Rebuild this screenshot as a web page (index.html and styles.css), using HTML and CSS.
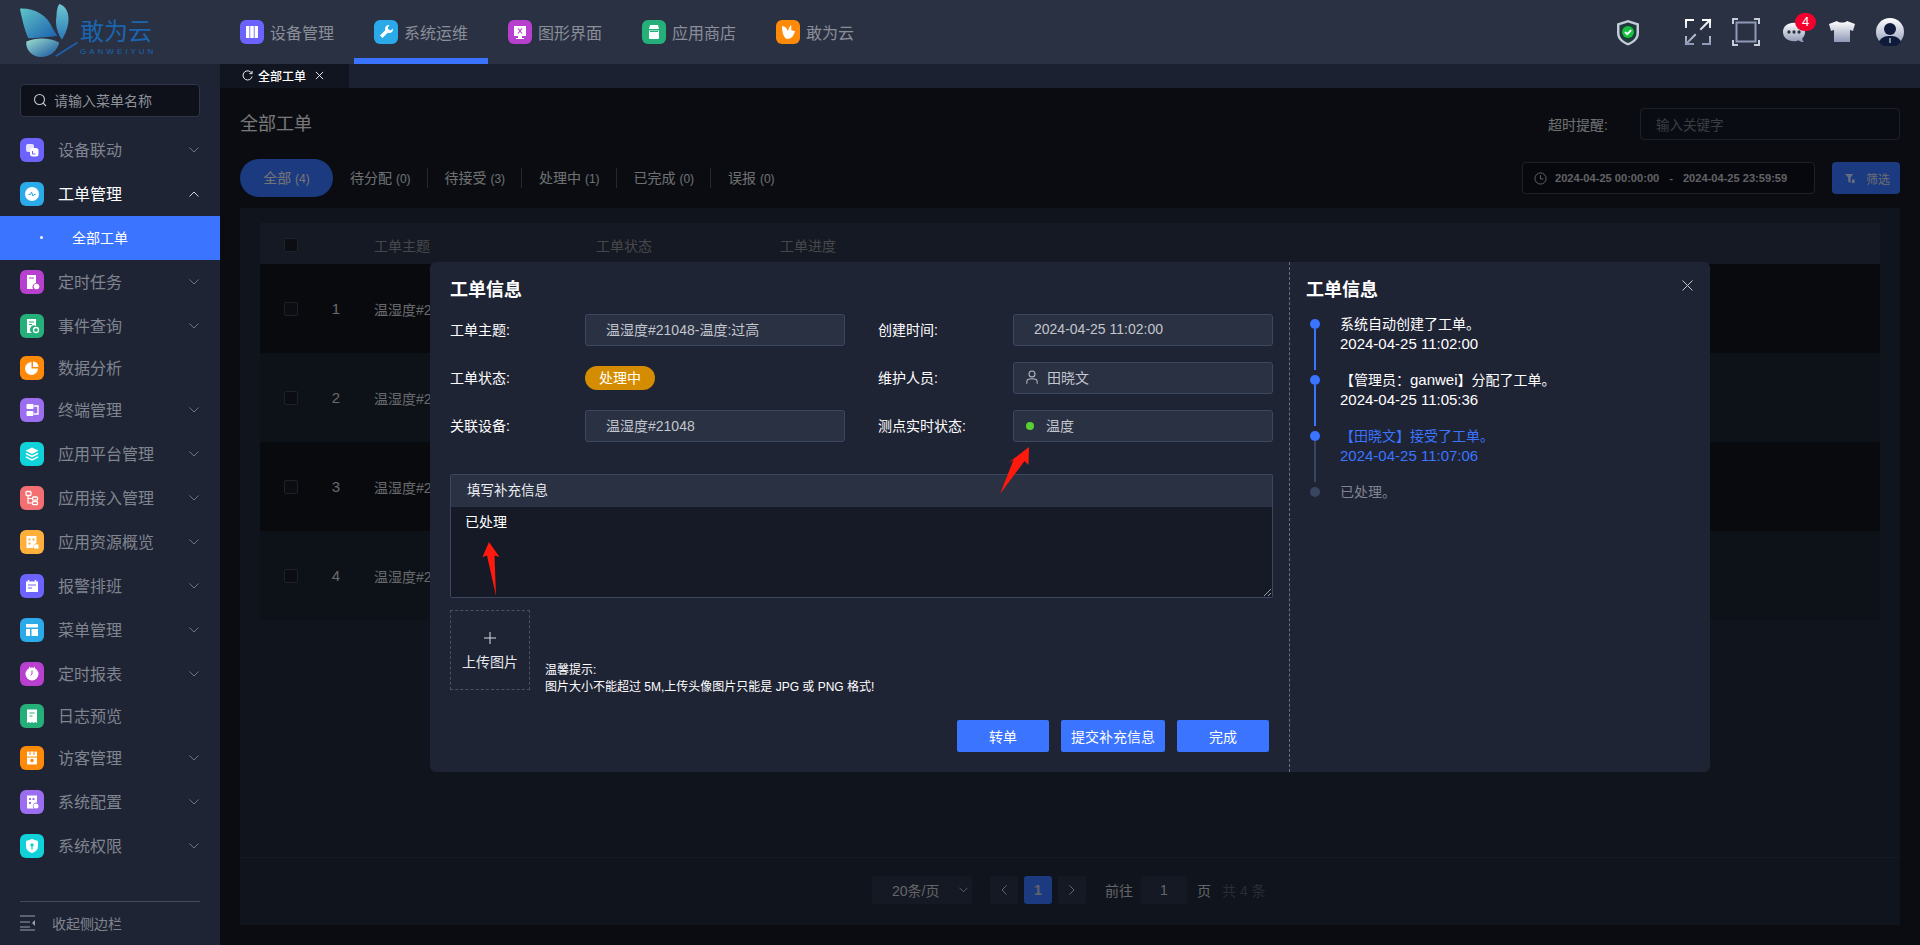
FILE: index.html
```html
<!DOCTYPE html>
<html lang="zh-CN">
<head>
<meta charset="utf-8">
<title>全部工单</title>
<link rel="stylesheet" href="styles.css">
</head>
<body>
<svg class="defs" width="0" height="0" aria-hidden="true">
  <defs>
    <linearGradient id="wingA" x1="0" y1="0" x2="1" y2="1"><stop offset="0" stop-color="#5fc4c8"/><stop offset="1" stop-color="#1a5fae"/></linearGradient>
    <linearGradient id="wingB" x1="0" y1="0" x2="0" y2="1"><stop offset="0" stop-color="#6cc8d0"/><stop offset="1" stop-color="#2a78b8"/></linearGradient>
    <linearGradient id="wingC" x1="0" y1="0" x2="1" y2="1"><stop offset="0" stop-color="#9fe0cf"/><stop offset="1" stop-color="#124f9e"/></linearGradient>
    <linearGradient id="metal" x1="0" y1="0" x2="0" y2="1"><stop offset="0" stop-color="#ffffff"/><stop offset="1" stop-color="#8e99b5"/></linearGradient>
    <symbol id="i-books" viewBox="0 0 24 24"><path d="M6 6h3.4v12H6zM10.2 6h3.6v12h-3.6zM14.6 6H18v12h-3.4z" fill="#fff"/></symbol>
    <symbol id="i-wrench" viewBox="0 0 24 24"><path d="M15.5 5a4 4 0 0 0-4.3 5.300L6 15.500 8.500 18l5.200-5.200A4 4 0 0 0 19 8.500l-2.500 2-2.500-1.500V7z" fill="#fff"/></symbol>
    <symbol id="i-screen" viewBox="0 0 24 24"><path d="M6 6h12v10H6z" fill="#fff"/><path d="M10 16h4v2h2v1H8v-1h2z" fill="#fff"/><path d="M10 8.500l4 5M14 8.500l-4 5" stroke="#b840cf" stroke-width="1.200"/></symbol>
    <symbol id="i-store" viewBox="0 0 24 24"><path d="M8 5h8l1 4H7zM7 10.500h10V18a1 1 0 0 1-1 1H8a1 1 0 0 1-1-1z" fill="#fff"/><path d="M8 11.500h8" stroke="#25b07a"/></symbol>
    <symbol id="i-fly" viewBox="0 0 24 24"><path d="M6 6c3 0 5 2.500 6 5 .5-2 1.500-4.500 3-6 .5 2 .5 3 0 5 1 .5 3 1 4 1-1 5-4 8-8 8-3-1-5-6-5-13z" fill="#fff"/></symbol>
    <symbol id="i-copy" viewBox="0 0 24 24"><rect x="6" y="6" width="8" height="8" rx="2" fill="#e6e2ff"/><rect x="10" y="10" width="8.500" height="8.500" rx="2.500" fill="#fff"/><path d="M12.500 13v3h3" stroke="#6c63ff" fill="none"/></symbol>
    <symbol id="i-pulse" viewBox="0 0 24 24"><circle cx="12" cy="12" r="7" fill="#fff"/><path d="M8.500 12.500h2l1-2.500 1.500 4 1-1.500h1.500" stroke="#2aaae8" fill="none"/></symbol>
    <symbol id="i-doc-clock" viewBox="0 0 24 24"><path d="M7 5h9v8a4 4 0 0 0-3 6H7z" fill="#fff"/><circle cx="16.500" cy="16.500" r="2.800" fill="#fff"/><path d="M9 8h5" stroke="#b840cf"/></symbol>
    <symbol id="i-doc-search" viewBox="0 0 24 24"><path d="M7 5h9v7a4 4 0 0 0-4 7H7z" fill="#fff"/><circle cx="16" cy="16" r="2.500" fill="none" stroke="#fff" stroke-width="1.300"/><path d="M9 8h5M9 10.500h3" stroke="#25b07a"/></symbol>
    <symbol id="i-pie" viewBox="0 0 24 24"><path d="M11.500 6v6.500H18A6.500 6.500 0 1 1 11.500 6z" fill="#fff"/><path d="M13 5.500A6 6 0 0 1 18.500 11H13z" fill="#fff"/></symbol>
    <symbol id="i-term" viewBox="0 0 24 24"><rect x="6.500" y="6" width="7" height="5" rx="1" fill="#fff"/><rect x="6.500" y="13" width="7" height="5" rx="1" fill="#fff"/><path d="M14 8h4v8h-4" stroke="#fff" stroke-width="1.400" fill="none"/></symbol>
    <symbol id="i-layers" viewBox="0 0 24 24"><path d="M12 5.500l6.500 3.300L12 12 5.500 8.800z" fill="#fff"/><path d="M6 11.500l6 3 6-3M6 14.800l6 3 6-3" stroke="#fff" stroke-width="1.500" fill="none"/></symbol>
    <symbol id="i-tree" viewBox="0 0 24 24"><rect x="6" y="5.500" width="5" height="4" rx="1" fill="none" stroke="#fff" stroke-width="1.300"/><rect x="12.500" y="11" width="5" height="3.200" rx="1" fill="none" stroke="#fff" stroke-width="1.300"/><rect x="12.500" y="15.500" width="5" height="3.200" rx="1" fill="none" stroke="#fff" stroke-width="1.300"/><path d="M8 9.500v7.500h4.500M8 12.500h4.500" stroke="#fff" stroke-width="1.200" fill="none"/></symbol>
    <symbol id="i-res" viewBox="0 0 24 24"><path d="M6.500 6h10v7a4 4 0 0 0-3 5h-7z" fill="#fff"/><rect x="14" y="14.500" width="4.500" height="4" fill="#fff"/><path d="M8.500 8.500h2v2h-2zM12.500 8.500h2v2h-2zM8.500 12.500h2v2h-2z" fill="#ffb03a"/></symbol>
    <symbol id="i-cal" viewBox="0 0 24 24"><path d="M6 7.500h12V18H6z" fill="#fff"/><path d="M8.500 6v3M15.500 6v3" stroke="#fff" stroke-width="1.500"/><path d="M8 11h8M8 14h4" stroke="#6c63ff"/></symbol>
    <symbol id="i-panel" viewBox="0 0 24 24"><path d="M6 6h12v3.500H6zM6 11h4v7H6zM11.500 11H18v7h-6.500z" fill="#fff"/></symbol>
    <symbol id="i-clock" viewBox="0 0 24 24"><circle cx="12" cy="12" r="6.500" fill="#fff"/><path d="M12 8.500V12l-1.500 1.500" stroke="#b840cf" fill="none"/><path d="M9 5l1.500 1M15 5l-1.500 1" stroke="#fff"/></symbol>
    <symbol id="i-log" viewBox="0 0 24 24"><path d="M7 5.500h10V19l-1.700-1-1.600 1-1.700-1-1.700 1-1.600-1L7 19z" fill="#fff"/><path d="M9.500 9h5M9.500 12h3" stroke="#25b07a"/></symbol>
    <symbol id="i-guest" viewBox="0 0 24 24"><rect x="7" y="5.500" width="10" height="13" rx="1" fill="#fff"/><path d="M10 5v4M14 5v4M7 11h10" stroke="#ff8a0a"/><circle cx="12" cy="14.500" r="1.800" fill="#ff8a0a"/></symbol>
    <symbol id="i-conf" viewBox="0 0 24 24"><path d="M7 5.500h10v7a3.500 3.500 0 0 0-3 6H7z" fill="#fff"/><path d="M9 8h2v2H9zM12.500 8h2v2h-2zM9 12h2v2H9z" fill="#9b6ef0"/><circle cx="16" cy="16" r="2.500" fill="#fff"/></symbol>
    <symbol id="i-shield" viewBox="0 0 24 24"><path d="M12 5l6 2v5c0 3.500-2.500 6-6 7-3.500-1-6-3.500-6-7V7z" fill="#fff"/><circle cx="12" cy="11" r="1.700" fill="#10d2d8"/><path d="M12 12v3.500" stroke="#10d2d8" stroke-width="1.200"/></symbol>
  </defs>
</svg>

<header class="topbar">
  <div class="logo">
    <svg class="logo-mark" viewBox="0 0 70 60" aria-hidden="true">
      <path d="M1 5c14-1 30 6 36 22l5 8C30 36 17 38 10 37 6 28 3 15 1 5z" fill="url(#wingA)"/>
      <path d="M44 0c8 2 11 11 10 20-1 8-4 14-7 19-4-6-8-15-6-26 0-5 1-10 3-13z" fill="url(#wingB)"/>
      <path d="M8 41c12-5 26-4 36 1-2 9-10 16-20 16C14 58 7 50 8 41z" fill="url(#wingC)"/>
      <path d="M40 57l24-15" stroke="#1d5fae" stroke-width="2"/>
    </svg>
    <div class="logo-text">
      <span class="logo-cn">敢为云</span>
      <span class="logo-en">GANWEIYUN</span>
    </div>
  </div>
  <nav class="topnav">
    <a class="topnav-item"><svg class="tile bg-indigo"><use href="#i-books"/></svg><span>设备管理</span></a>
    <a class="topnav-item is-active"><svg class="tile bg-blue"><use href="#i-wrench"/></svg><span>系统运维</span></a>
    <a class="topnav-item"><svg class="tile bg-magenta"><use href="#i-screen"/></svg><span>图形界面</span></a>
    <a class="topnav-item"><svg class="tile bg-green"><use href="#i-store"/></svg><span>应用商店</span></a>
    <a class="topnav-item"><svg class="tile bg-orange"><use href="#i-fly"/></svg><span>敢为云</span></a>
  </nav>
  <div class="tools">
    <svg class="tool tool-shield" viewBox="0 0 28 28" aria-hidden="true">
      <path d="M14 2l11 3.500v9.500c0 6-4.500 10-11 12.500C7.500 25 3 21 3 15V5.500z" fill="#c3cbd8"/>
      <path d="M14 4.500l8.500 2.700V15c0 4.800-3.500 8-8.500 10-5-2-8.500-5.200-8.500-10V7.200z" fill="#1f3a3a"/>
      <circle cx="14" cy="14" r="6" fill="#15c13f"/>
      <path d="M11 14l2.200 2.200 4-4" stroke="#fff" stroke-width="1.800" fill="none"/>
    </svg>
    <svg class="tool" viewBox="0 0 28 28" aria-hidden="true">
      <g fill="none" stroke="url(#metal)" stroke-width="2" stroke-linecap="square">
        <path d="M2 9V2h7M26 19v7h-7"/>
        <path d="M17 11l9-9M11 17l-9 9"/>
        <path d="M19 2h7v7M9 26H2v-7"/>
      </g>
    </svg>
    <svg class="tool" viewBox="0 0 28 28" aria-hidden="true">
      <g fill="none" stroke-width="2">
        <rect x="4.500" y="4.500" width="19" height="19" stroke="#8e99b5"/>
        <path d="M1 6V1h5M22 1h5v5M27 22v5h-5M6 27H1v-5" stroke="#c6ccd9"/>
      </g>
    </svg>
    <div class="tool-chat">
      <svg class="tool" viewBox="-1.250 -1.250 30.500 30.500" aria-hidden="true">
        <path d="M14 4c7 0 12 4 12 10 0 3-1 5-3 7 0 2 1 3 2 4-3 0-5-1-6-2-2 1-3 1-5 1-7 0-12-4-12-10S7 4 14 4z" fill="url(#metal)"/>
        <circle cx="8.500" cy="14" r="1.800" fill="#2a3143"/><circle cx="14" cy="14" r="1.800" fill="#2a3143"/><circle cx="19.500" cy="14" r="1.800" fill="#2a3143"/>
      </svg>
      <span class="badge">4</span>
    </div>
    <svg class="tool" viewBox="0 0 28 28" aria-hidden="true">
      <path d="M9 3c2 2 8 2 10 0l8 3-2 7-3-1v12H6V12l-3 1-2-7z" fill="url(#metal)"/>
    </svg>
    <svg class="tool" viewBox="0 0 28 28" aria-hidden="true">
      <circle cx="14" cy="14" r="14" fill="url(#metal)"/>
      <circle cx="14" cy="11" r="6" fill="#101a3a"/>
      <path d="M3 24c2-5 6-6 11-6s9 1 11 6a14 14 0 0 1-22 0z" fill="#101a3a"/>
      <path d="M14 20v5" stroke="#c8cedc" stroke-width="1.200"/>
    </svg>
  </div>
</header>

<div class="layout">
  <aside class="sidebar">
    <div class="menu-search">
      <svg class="search-ic" viewBox="0 0 14 14" aria-hidden="true"><circle cx="6.500" cy="6.500" r="5" fill="none" stroke="#c5c8cf" stroke-width="1.100"/><path d="M10.200 10.200L13 13" stroke="#c5c8cf" stroke-width="1.100"/></svg>
      <span>请输入菜单名称</span>
    </div>
    <ul class="menu">
      <li class="menu-item"><svg class="tile bg-indigo"><use href="#i-copy"/></svg><span>设备联动</span><svg class="chev" viewBox="0 0 10 6"><path d="M.5.500L5 5 9.500.5"/></svg></li>
      <li class="menu-item is-open"><svg class="tile bg-blue"><use href="#i-pulse"/></svg><span>工单管理</span><svg class="chev" viewBox="0 0 10 6"><path d="M.5 5.500L5 1l4.500 4.500"/></svg></li>
      <li class="menu-sub"><i class="sub-dot"></i><span>全部工单</span></li>
      <li class="menu-item"><svg class="tile bg-magenta"><use href="#i-doc-clock"/></svg><span>定时任务</span><svg class="chev" viewBox="0 0 10 6"><path d="M.5.500L5 5 9.500.5"/></svg></li>
      <li class="menu-item"><svg class="tile bg-green"><use href="#i-doc-search"/></svg><span>事件查询</span><svg class="chev" viewBox="0 0 10 6"><path d="M.5.500L5 5 9.500.5"/></svg></li>
      <li class="menu-item is-leaf"><svg class="tile bg-orange"><use href="#i-pie"/></svg><span>数据分析</span></li>
      <li class="menu-item"><svg class="tile bg-violet"><use href="#i-term"/></svg><span>终端管理</span><svg class="chev" viewBox="0 0 10 6"><path d="M.5.500L5 5 9.500.5"/></svg></li>
      <li class="menu-item"><svg class="tile bg-teal"><use href="#i-layers"/></svg><span>应用平台管理</span><svg class="chev" viewBox="0 0 10 6"><path d="M.5.500L5 5 9.500.5"/></svg></li>
      <li class="menu-item"><svg class="tile bg-coral"><use href="#i-tree"/></svg><span>应用接入管理</span><svg class="chev" viewBox="0 0 10 6"><path d="M.5.500L5 5 9.500.5"/></svg></li>
      <li class="menu-item"><svg class="tile bg-amber"><use href="#i-res"/></svg><span>应用资源概览</span><svg class="chev" viewBox="0 0 10 6"><path d="M.5.500L5 5 9.500.5"/></svg></li>
      <li class="menu-item"><svg class="tile bg-indigo"><use href="#i-cal"/></svg><span>报警排班</span><svg class="chev" viewBox="0 0 10 6"><path d="M.5.500L5 5 9.500.5"/></svg></li>
      <li class="menu-item"><svg class="tile bg-blue"><use href="#i-panel"/></svg><span>菜单管理</span><svg class="chev" viewBox="0 0 10 6"><path d="M.5.500L5 5 9.500.5"/></svg></li>
      <li class="menu-item"><svg class="tile bg-magenta"><use href="#i-clock"/></svg><span>定时报表</span><svg class="chev" viewBox="0 0 10 6"><path d="M.5.500L5 5 9.500.5"/></svg></li>
      <li class="menu-item is-leaf"><svg class="tile bg-green"><use href="#i-log"/></svg><span>日志预览</span></li>
      <li class="menu-item"><svg class="tile bg-orange"><use href="#i-guest"/></svg><span>访客管理</span><svg class="chev" viewBox="0 0 10 6"><path d="M.5.500L5 5 9.500.5"/></svg></li>
      <li class="menu-item"><svg class="tile bg-violet"><use href="#i-conf"/></svg><span>系统配置</span><svg class="chev" viewBox="0 0 10 6"><path d="M.5.500L5 5 9.500.5"/></svg></li>
      <li class="menu-item"><svg class="tile bg-teal"><use href="#i-shield"/></svg><span>系统权限</span><svg class="chev" viewBox="0 0 10 6"><path d="M.5.500L5 5 9.500.5"/></svg></li>
    </ul>
    <div class="collapse">
      <svg class="collapse-ic" viewBox="0 0 16 16" aria-hidden="true"><path d="M0 1h15M0 7h10M0 12h10M0 15h15" stroke="#9aa0ac" fill="none"/><path d="M15 5v6l-3-3z" fill="#9aa0ac"/></svg>
      <span>收起侧边栏</span>
    </div>
  </aside>

  <main class="main">
    <div class="tabbar">
      <div class="tab">
        <svg class="tab-ic" viewBox="0 0 12 12" aria-hidden="true"><path d="M10.500 3.500A5 5 0 1 0 11 7" fill="none" stroke="#fff" stroke-width="1"/><path d="M11 1v3H8" fill="none" stroke="#fff" stroke-width="1"/></svg>
        <span>全部工单</span>
        <svg class="tab-x" viewBox="0 0 10 10" aria-hidden="true"><path d="M1 1l8 8M9 1L1 9" stroke="#fff"/></svg>
      </div>
    </div>

    <div class="content">
      <div class="page">
        <div class="page-head">
          <h1 class="page-title">全部工单</h1>
          <label class="kw-label">超时提醒:</label>
          <div class="kw-input">输入关键字</div>
        </div>
        <div class="filter-row">
          <div class="status-tabs">
            <span class="st-pill">全部 <small>(4)</small></span>
            <span class="st-item">待分配 <small>(0)</small></span>
            <span class="st-item">待接受 <small>(3)</small></span>
            <span class="st-item">处理中 <small>(1)</small></span>
            <span class="st-item">已完成 <small>(0)</small></span>
            <span class="st-item is-last">误报 <small>(0)</small></span>
          </div>
          <div class="date-range">
            <svg class="date-ic" viewBox="0 0 14 14" aria-hidden="true"><circle cx="7" cy="7" r="6" fill="none" stroke="#fff"/><path d="M7 3.500V7.500H10" fill="none" stroke="#fff"/></svg>
            <span>2024-04-25 00:00:00</span><span class="date-sep">-</span><span>2024-04-25 23:59:59</span>
          </div>
          <button class="filter-btn">
            <svg class="filter-ic" viewBox="0 0 12 12" aria-hidden="true"><path d="M0 1h9L6 5v6L3.500 9.500V5z" fill="#fff"/><rect x="7.500" y="7" width="3" height="4" fill="#fff"/></svg>
            筛选
          </button>
        </div>
        <section class="panel">
          <div class="table">
            <div class="t-row t-head"><i class="check is-head"></i><span></span><span>工单主题</span><span>工单状态</span><span>工单进度</span></div>
            <div class="t-row t-odd"><i class="check"></i><span class="t-num">1</span><span>温湿度#2</span><span></span><span></span></div>
            <div class="t-row t-even"><i class="check"></i><span class="t-num">2</span><span>温湿度#2</span><span></span><span></span></div>
            <div class="t-row t-odd"><i class="check"></i><span class="t-num">3</span><span>温湿度#2</span><span></span><span></span></div>
            <div class="t-row t-even"><i class="check"></i><span class="t-num">4</span><span>温湿度#2</span><span></span><span></span></div>
          </div>
          <div class="pager">
            <div class="pg-select">20条/页<svg class="pg-chev" viewBox="0 0 10 6"><path d="M.5.500L5 5 9.500.5"/></svg></div>
            <div class="pg-btn"><svg viewBox="0 0 6 10"><path d="M5.500.5L1 5l4.500 4.500"/></svg></div>
            <div class="pg-btn is-current">1</div>
            <div class="pg-btn"><svg viewBox="0 0 6 10"><path d="M.5.500L5 5 .5 9.500"/></svg></div>
            <span class="pg-goto">前往</span>
            <div class="pg-input">1</div>
            <span class="pg-page">页</span>
            <span class="pg-total">共 4 条</span>
          </div>
        </section>
      </div>

      <div class="overlay"></div>

      <div class="modal">
        <div class="m-left">
          <h2 class="m-title">工单信息</h2>
          <div class="form">
            <label>工单主题:</label><div class="field">温湿度#21048-温度:过高</div>
            <label>创建时间:</label><div class="field">2024-04-25 11:02:00</div>
            <label>工单状态:</label><div class="plain"><span class="status-pill">处理中</span></div>
            <label>维护人员:</label>
            <div class="field field-ic">
              <svg class="user-ic" viewBox="0 0 14 16" aria-hidden="true"><circle cx="7" cy="4.500" r="3.500" fill="none" stroke="#b9bcc4" stroke-width="1.200"/><path d="M1 16v-3c0-2 2-3 6-3s6 1 6 3v3" fill="none" stroke="#b9bcc4" stroke-width="1.200"/></svg>
              <span>田晓文</span>
            </div>
            <label>关联设备:</label><div class="field">温湿度#21048</div>
            <label>测点实时状态:</label>
            <div class="field field-ic"><i class="live-dot"></i><span>温度</span></div>
          </div>
          <div class="extra">
            <div class="extra-head">填写补充信息</div>
            <div class="extra-body">已处理<svg class="resize" viewBox="0 0 8 8" aria-hidden="true"><path d="M1 8l7-7M5 8l3-3" stroke="#9aa0ac"/></svg></div>
          </div>
          <div class="upload-row">
            <div class="upload">
              <svg class="plus" viewBox="0 0 12 12" aria-hidden="true"><path d="M6 0v12M0 6h12" stroke="#d8dbe2"/></svg>
              <span>上传图片</span>
            </div>
            <p class="hint">温馨提示:<br>图片大小不能超过 5M,上传头像图片只能是 JPG 或 PNG 格式!</p>
          </div>
          <div class="actions">
            <button class="btn">转单</button>
            <button class="btn btn-wide">提交补充信息</button>
            <button class="btn">完成</button>
          </div>
        </div>
        <div class="m-right">
          <h2 class="m-title">工单信息</h2>
          <ul class="timeline">
            <li class="tl-item is-done"><div class="tl-rail"><i class="tl-dot"></i><i class="tl-line"></i></div><p>系统自动创建了工单。<br><span class="tl-num">2024-04-25 11:02:00</span></p></li>
            <li class="tl-item is-done"><div class="tl-rail"><i class="tl-dot"></i><i class="tl-line"></i></div><p>【管理员：<span class="tl-num">ganwei</span>】分配了工单。<br><span class="tl-num">2024-04-25 11:05:36</span></p></li>
            <li class="tl-item is-current"><div class="tl-rail"><i class="tl-dot"></i><i class="tl-line"></i></div><p>【田晓文】接受了工单。<br><span class="tl-num">2024-04-25 11:07:06</span></p></li>
            <li class="tl-item is-todo"><div class="tl-rail"><i class="tl-dot"></i></div><p>已处理。</p></li>
          </ul>
        </div>
        <svg class="m-close" viewBox="0 0 11 11" aria-hidden="true"><path d="M.5.500l10 10M10.500.5l-10 10" stroke="#c5c8cf"/></svg>
        <svg class="arrow arrow-a" viewBox="0 0 30 48" aria-hidden="true"><path d="M0 47L13.500 13 8 16 29 0 28.500 18 24.500 14z" fill="#ff1a0d"/></svg>
        <svg class="arrow arrow-b" viewBox="0 0 18 54" aria-hidden="true"><path d="M14 54L5 13.500.5 15 7 0 17.500 15 12.500 13.500z" fill="#ff1a0d"/></svg>
      </div>
    </div>
  </main>
</div>
</body>
</html>
```
FILE: styles.css
```css
* { box-sizing: border-box; }
html, body { margin: 0; height: 100%; }
body {
  width: 1920px; height: 945px; overflow: hidden;
  display: flex; flex-direction: column;
  font-family: "Liberation Sans", "Noto Sans CJK SC", sans-serif;
  font-size: 14px; color: #fff; background: #1f2435;
}
ul { list-style: none; margin: 0; padding: 0; }
h1, h2, p { margin: 0; }
button { font: inherit; border: 0; color: inherit; padding: 0; }
.defs { position: absolute; }

.tile { width: 24px; height: 24px; border-radius: 6px; flex: none; display: block; }
.bg-indigo { background: #6c63ff; }
.bg-blue { background: #2aaae8; }
.bg-magenta { background: #b840cf; }
.bg-green { background: #25b07a; }
.bg-orange { background: #ff8a0a; }
.bg-violet { background: #9b6ef0; }
.bg-teal { background: #10d2d8; }
.bg-coral { background: #f36f72; }
.bg-amber { background: #ffb03a; }

/* top bar */
.topbar { height: 64px; flex: none; display: flex; background: #2a3143; }
.logo { width: 220px; flex: none; display: flex; align-items: center; padding-left: 19px; }
.logo-mark { width: 64px; height: 55px; flex: none; margin-top: -2px; margin-right: -3px; }
.logo-text { display: flex; flex-direction: column; padding-top: 9px; }
.logo-cn { font-size: 24px; line-height: 30px; color: #1a65b0; font-weight: 400; }
.logo-en { font-size: 8px; line-height: 10px; color: #1a65b0; letter-spacing: 3px; white-space: nowrap; }
.topnav { display: flex; }
.topnav-item { display: flex; align-items: center; gap: 6px; padding: 0 20px; font-size: 16px; color: #8a8e98; border-bottom: 6px solid transparent; border-top: 6px solid transparent; }
.topnav-item.is-active { border-bottom-color: #3b74ff; }
.tools { margin-left: auto; display: flex; align-items: center; gap: 20px; padding-right: 16px; }
.tool { width: 28px; height: 28px; display: block; flex: none; }
.tool-shield { margin-right: 22px; }
.tool-chat { position: relative; }
.badge { position: absolute; top: -5px; left: 15px; width: 21px; height: 18px; border-radius: 9px; background: #f5002d; color: #fff; font-size: 13px; line-height: 18px; text-align: center; }

/* layout */
.layout { flex: 1; display: flex; min-height: 0; }
.sidebar { width: 220px; flex: none; display: flex; flex-direction: column; background: #1f2435; padding-top: 20px; }
.menu-search { width: 180px; height: 33px; margin: 0 20px 11px; padding: 0 0 2px 12px; display: flex; align-items: center; gap: 7px; background: #0e1119; border: 1px solid #2f364b; border-radius: 4px; color: #8d919b; }
.search-ic { width: 14px; height: 14px; flex: none; }
.menu { flex: 1; }
.menu-item { height: 44px; display: flex; align-items: center; padding: 0 20px; font-size: 16px; color: #7f848f; }
.menu-item.is-leaf { height: 40px; }
.menu-item > span { margin: -2px 0 0 14px; flex: 1; }
.menu-item.is-open { color: #fff; }
.chev { width: 10px; height: 6px; flex: none; margin-right: 1px; overflow: visible; }
.chev path { fill: none; stroke: #6f7480; }
.is-open .chev path { stroke: #d0d3da; }
.menu-sub { height: 44px; display: flex; align-items: center; background: #3b74ff; padding: 0 0 2px 40px; color: #fff; }
.sub-dot { width: 3px; height: 3px; background: #fff; border-radius: 50%; margin-right: 29px; }
.collapse { margin: 0 20px; height: 44px; border-top: 1px solid #444a5c; display: flex; align-items: center; color: #7f848f; padding-bottom: 2px; }
.collapse-ic { width: 16px; height: 16px; margin-right: 16px; flex: none; }

/* main */
.main { flex: 1; min-width: 0; display: flex; flex-direction: column; }
.tabbar { height: 24px; flex: none; background: #1b2130; display: flex; }
.tab { width: 129px; display: flex; align-items: center; padding: 0 0 1px 22px; background: #11151f; font-size: 12px; font-weight: 500; color: #fff; }
.tab-ic { width: 11px; height: 11px; margin-right: 5px; flex: none; }
.tab-x { width: 9px; height: 9px; margin-left: 9px; flex: none; }
.content { flex: 1; position: relative; min-height: 0; background: #141824; }
.page { height: 100%; padding: 20px; display: flex; flex-direction: column; color: #e9e9ec; }
.overlay { position: absolute; inset: 0; background: rgba(0, 0, 0, .5); }

.page-head { height: 32px; display: flex; align-items: center; flex: none; }
.page-title { font-size: 18px; font-weight: 400; line-height: 32px; margin-right: auto; color: #eee; }
.kw-label { color: #dfe0e3; margin-right: 32px; }
.kw-input { width: 260px; height: 32px; padding-left: 15px; display: flex; align-items: center; font-size: 13.500px; background: #151926; border: 1px solid #3b4156; border-radius: 4px; color: #757a88; }

.filter-row { margin-top: 19px; height: 38px; display: flex; align-items: flex-start; flex: none; }
.status-tabs { display: flex; align-items: center; height: 38px; margin-right: auto; }
.status-tabs small { font-size: 12px; }
.st-pill { width: 93px; height: 38px; border-radius: 19px; background: #3874ff; text-align: center; line-height: 38px; }
.st-item { width: 94.500px; height: 20px; line-height: 20px; padding-left: 17px; border-right: 1px solid #4a5064; color: #dfe0e3; }
.st-item.is-last { border-right: 0; }
.date-range { width: 293px; height: 32px; margin-top: 3px; padding-left: 11px; display: flex; align-items: center; font-size: 11.100px; font-weight: 700; color: #c0c2c9; background: #0e111a; border: 1px solid #3b4156; border-radius: 4px; }
.date-ic { width: 13px; height: 13px; margin-right: 8px; flex: none; opacity: .8; }
.date-sep { margin: 0 10px; }
.filter-btn { width: 68px; height: 32px; margin: 3px 0 0 17px; display: flex; align-items: center; gap: 10px; background: #3874ff; border-radius: 4px; font-size: 12px; color: #d8dbe3; padding-left: 13px; }
.filter-ic { width: 11px; height: 11px; flex: none; opacity: .75; }

.panel { margin-top: 11px; flex: 1; min-height: 0; background: #20283a; padding: 15px 20px 0; display: flex; flex-direction: column; color: #d0d2d8; }
.table { flex: 1; }
.t-row { display: grid; grid-template-columns: 14px 76px 222px 184px 1fr; align-items: center; padding-left: 24px; height: 89px; }
.t-head { height: 41px; background: #2a3346; color: #8d8f96; padding-top: 2px; }
.t-odd { background: #13151d; }
.t-even { background: #1a2230; }
.t-num { text-align: center; font-size: 15px; }
.check { display: block; width: 14px; height: 14px; border: 1px solid #3c4258; border-radius: 2px; background: #171a26; }
.check.is-head { background: #191c28; }

.pager { height: 68px; flex: none; margin: 0 -20px; border-top: 1px solid #2a3348; display: flex; align-items: center; padding: 0 0 4px 632px; color: #c8cad0; font-size: 14px; }
.pg-select { width: 100px; height: 28px; margin-right: 18px; padding-left: 20px; display: flex; align-items: center; background: #2a3346; border-radius: 3px; }
.pg-chev { width: 9px; height: 6px; margin-left: 20px; overflow: visible; }
.pg-chev path, .pg-btn path { fill: none; stroke: #c8cad0; }
.pg-btn { width: 28px; height: 28px; margin-right: 6px; display: flex; align-items: center; justify-content: center; background: #2a3346; border-radius: 3px; font-weight: 700; }
.pg-btn svg { width: 6px; height: 10px; overflow: visible; }
.pg-btn.is-current { background: #3874ff; }
.pg-goto { margin-left: 13px; margin-right: 8px; }
.pg-input { width: 46px; height: 28px; background: #2a3346; border-radius: 3px; text-align: center; line-height: 28px; margin-right: 10px; }
.pg-total { margin-left: 11px; color: #555a66; }

/* modal */
.modal { position: absolute; left: 210px; top: 174px; width: 1280px; height: 510px; display: flex; background: #1f2435; border-radius: 6px; }
.m-title { font-size: 18px; font-weight: 700; line-height: 24px; color: #fff; }
.m-left { width: 860px; flex: none; padding: 16px 16px 0 20px; border-right: 1px dashed #6a7080; }
.form { margin-top: 12px; display: grid; grid-template-columns: 135px 260px 168px 260px; grid-auto-rows: 32px; row-gap: 16px; align-items: center; }
.form label { padding-bottom: 2px; }
.form label:nth-of-type(even) { padding-left: 33px; }
.field { height: 32px; display: flex; align-items: center; padding: 0 0 2px 20px; background: #2a3143; border: 1px solid #3d4760; border-radius: 3px; color: #c3c6cd; font-size: 14px; }
.field-ic { padding-left: 12px; }
.user-ic { width: 12px; height: 14px; margin-right: 9px; flex: none; }
.live-dot { width: 8px; height: 8px; border-radius: 50%; background: #58d034; margin: 2px 12px 0 0; flex: none; }
.status-pill { display: block; width: 70px; height: 24px; border-radius: 12px; background: #d48d00; color: #fff; text-align: center; line-height: 24px; }
.extra { margin-top: 32px; height: 124px; display: flex; flex-direction: column; border: 1px solid #3d4760; border-radius: 2px; }
.extra-head { height: 32px; flex: none; padding-left: 16px; line-height: 32px; background: #2a3143; font-size: 13.500px; color: #eceef2; }
.extra-body { flex: 1; position: relative; background: #151a26; padding: 5px 0 0 14px; line-height: 20px; color: #fff; }
.resize { position: absolute; right: 1px; bottom: 1px; width: 8px; height: 8px; }
.upload-row { margin-top: 12px; height: 80px; display: flex; gap: 15px; }
.upload { width: 80px; height: 80px; display: flex; flex-direction: column; align-items: center; border: 1px dashed #4a5166; color: #e8e9ed; font-size: 14px; line-height: 20px; padding-top: 21px; }
.plus { width: 12px; height: 12px; margin-bottom: 8px; flex: none; }
.hint { margin-top: 52px; font-size: 12px; line-height: 17px; color: #fff; }
.actions { margin-top: 30px; margin-right: 4px; display: flex; justify-content: flex-end; gap: 12px; }
.btn { width: 92px; height: 32px; background: #3b74ff; border-radius: 2px; color: #fff; font-size: 14px; }
.btn-wide { width: 104px; }

.m-right { flex: 1; padding: 16px 16px 0; }
.timeline { margin-top: 12px; }
.tl-item { display: flex; height: 56px; line-height: 20px; color: #fff; }
.tl-item.is-current { color: #3b74ff; }
.tl-item.is-todo { color: #80858f; }
.tl-item p { margin-left: 20px; }
.tl-num { font-size: 15px; }
.tl-rail { width: 10px; margin-left: 4px; flex: none; display: flex; flex-direction: column; align-items: center; padding-top: 5px; }
.tl-dot { width: 10px; height: 10px; border-radius: 50%; flex: none; background: #3b74ff; }
.tl-line { width: 2px; flex: 1; background: #3b74ff; }
.is-current .tl-line { background: #3a4560; }
.is-todo .tl-dot { background: #3a4560; }
.m-close { position: absolute; top: 18px; left: 1252px; width: 11px; height: 11px; }
.arrow { position: absolute; }
.arrow-a { left: 570px; top: 185px; width: 30px; height: 48px; }
.arrow-b { left: 52px; top: 280px; width: 18px; height: 54px; }
```
